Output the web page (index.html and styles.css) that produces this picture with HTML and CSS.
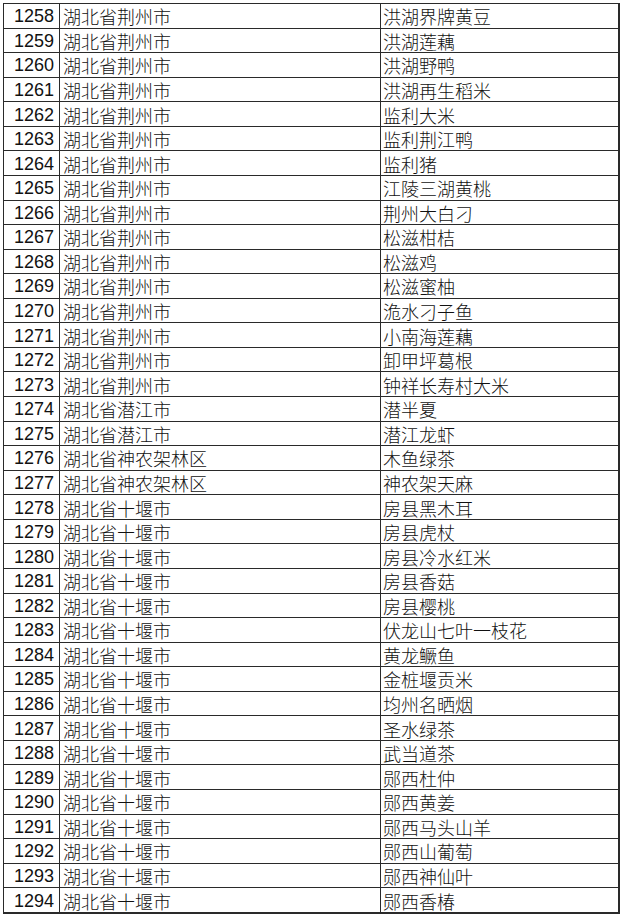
FILE: index.html
```html
<!DOCTYPE html>
<html lang="zh">
<head>
<meta charset="utf-8">
<link rel="stylesheet" href="styles.css">
</head>
<body>
<table class="list">
<colgroup><col class="c-num"><col class="c-region"><col class="c-name"></colgroup>
<tbody>
<tr><td class="num">1258</td><td class="txt">湖北省荆州市</td><td class="txt name">洪湖界牌黄豆</td></tr>
<tr><td class="num">1259</td><td class="txt">湖北省荆州市</td><td class="txt name">洪湖莲藕</td></tr>
<tr><td class="num">1260</td><td class="txt">湖北省荆州市</td><td class="txt name">洪湖野鸭</td></tr>
<tr><td class="num">1261</td><td class="txt">湖北省荆州市</td><td class="txt name">洪湖再生稻米</td></tr>
<tr><td class="num">1262</td><td class="txt">湖北省荆州市</td><td class="txt name">监利大米</td></tr>
<tr><td class="num">1263</td><td class="txt">湖北省荆州市</td><td class="txt name">监利荆江鸭</td></tr>
<tr><td class="num">1264</td><td class="txt">湖北省荆州市</td><td class="txt name">监利猪</td></tr>
<tr><td class="num">1265</td><td class="txt">湖北省荆州市</td><td class="txt name">江陵三湖黄桃</td></tr>
<tr><td class="num">1266</td><td class="txt">湖北省荆州市</td><td class="txt name">荆州大白刁</td></tr>
<tr><td class="num">1267</td><td class="txt">湖北省荆州市</td><td class="txt name">松滋柑桔</td></tr>
<tr><td class="num">1268</td><td class="txt">湖北省荆州市</td><td class="txt name">松滋鸡</td></tr>
<tr><td class="num">1269</td><td class="txt">湖北省荆州市</td><td class="txt name">松滋蜜柚</td></tr>
<tr><td class="num">1270</td><td class="txt">湖北省荆州市</td><td class="txt name">洈水刁子鱼</td></tr>
<tr><td class="num">1271</td><td class="txt">湖北省荆州市</td><td class="txt name">小南海莲藕</td></tr>
<tr><td class="num">1272</td><td class="txt">湖北省荆州市</td><td class="txt name">卸甲坪葛根</td></tr>
<tr><td class="num">1273</td><td class="txt">湖北省荆州市</td><td class="txt name">钟祥长寿村大米</td></tr>
<tr><td class="num">1274</td><td class="txt">湖北省潜江市</td><td class="txt name">潜半夏</td></tr>
<tr><td class="num">1275</td><td class="txt">湖北省潜江市</td><td class="txt name">潜江龙虾</td></tr>
<tr><td class="num">1276</td><td class="txt">湖北省神农架林区</td><td class="txt name">木鱼绿茶</td></tr>
<tr><td class="num">1277</td><td class="txt">湖北省神农架林区</td><td class="txt name">神农架天麻</td></tr>
<tr><td class="num">1278</td><td class="txt">湖北省十堰市</td><td class="txt name">房县黑木耳</td></tr>
<tr><td class="num">1279</td><td class="txt">湖北省十堰市</td><td class="txt name">房县虎杖</td></tr>
<tr><td class="num">1280</td><td class="txt">湖北省十堰市</td><td class="txt name">房县冷水红米</td></tr>
<tr><td class="num">1281</td><td class="txt">湖北省十堰市</td><td class="txt name">房县香菇</td></tr>
<tr><td class="num">1282</td><td class="txt">湖北省十堰市</td><td class="txt name">房县樱桃</td></tr>
<tr><td class="num">1283</td><td class="txt">湖北省十堰市</td><td class="txt name">伏龙山七叶一枝花</td></tr>
<tr><td class="num">1284</td><td class="txt">湖北省十堰市</td><td class="txt name">黄龙鳜鱼</td></tr>
<tr><td class="num">1285</td><td class="txt">湖北省十堰市</td><td class="txt name">金桩堰贡米</td></tr>
<tr><td class="num">1286</td><td class="txt">湖北省十堰市</td><td class="txt name">均州名晒烟</td></tr>
<tr><td class="num">1287</td><td class="txt">湖北省十堰市</td><td class="txt name">圣水绿茶</td></tr>
<tr><td class="num">1288</td><td class="txt">湖北省十堰市</td><td class="txt name">武当道茶</td></tr>
<tr><td class="num">1289</td><td class="txt">湖北省十堰市</td><td class="txt name">郧西杜仲</td></tr>
<tr><td class="num">1290</td><td class="txt">湖北省十堰市</td><td class="txt name">郧西黄姜</td></tr>
<tr><td class="num">1291</td><td class="txt">湖北省十堰市</td><td class="txt name">郧西马头山羊</td></tr>
<tr><td class="num">1292</td><td class="txt">湖北省十堰市</td><td class="txt name">郧西山葡萄</td></tr>
<tr><td class="num">1293</td><td class="txt">湖北省十堰市</td><td class="txt name">郧西神仙叶</td></tr>
<tr><td class="num">1294</td><td class="txt">湖北省十堰市</td><td class="txt name">郧西香椿</td></tr>
</tbody>
</table>
</body>
</html>
```

FILE: styles.css
```css
html, body {
  margin: 0;
  padding: 0;
  background: #fff;
}
body {
  padding: 3px 0 0 3px;
}
.list {
  border-collapse: collapse;
  table-layout: fixed;
  width: 615px;
  height: 911px;
  border: 1px solid #2a2a2a;
  border-right-width: 2px;
  border-bottom-width: 2px;
  color: #111;
}
.c-num { width: 56px; }
.c-region { width: 321px; }
.c-name { width: 238px; }
.list td {
  border: 1px solid #2a2a2a;
  padding: 1px 0 0 0;
  vertical-align: middle;
  white-space: nowrap;
}
.num {
  font-family: "Liberation Sans", Arial, sans-serif;
  font-size: 18px;
  line-height: 22px;
  text-align: right;
  padding-right: 5px !important;
}
.txt {
  font-family: "Noto Sans CJK SC", sans-serif;
  font-size: 18px;
  font-weight: 300;
  line-height: 22px;
  padding-left: 3px !important;
}
.name {
  padding-left: 2px !important;
}
```
